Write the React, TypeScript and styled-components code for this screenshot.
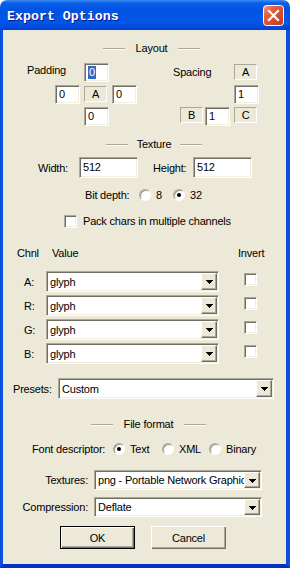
import React from 'react';
import styled, { createGlobalStyle } from 'styled-components';

const GlobalStyle = createGlobalStyle`
    html, body {
        margin: 0;
        padding: 0;
        background: #ffffff;
    }
    body {
        font-family: "Liberation Sans", Arial, sans-serif;
        font-size: 11px;
        letter-spacing: -0.2px;
        color: #000000;
    }
    * {
        box-sizing: border-box;
    }
`;

const Window = styled.div`
    width: 290px;
    height: 568px;
    display: flex;
    flex-direction: column;
    border-radius: 7px 7px 0 0;
    overflow: hidden;
`;

const TitleBar = styled.div`
    flex: none;
    height: 30px;
    display: flex;
    align-items: center;
    justify-content: space-between;
    padding: 0 6px 0 7px;
    background: linear-gradient(
        #3c8ef3 0px,
        #0a5fe6 3px,
        #0054e3 10px,
        #0157e8 22px,
        #0348d8 28px,
        #0240cf 30px
    );
`;

const Title = styled.span`
    font-family: "Liberation Mono", "DejaVu Sans Mono", monospace;
    font-weight: bold;
    font-size: 13.3px;
    letter-spacing: 0;
    color: #ffffff;
    padding-top: 3px;
    text-shadow: 1px 1px 0 #0a1883;
`;

const CloseButton = styled.div`
    width: 21px;
    height: 21px;
    display: flex;
`;

const Client = styled.div`
    flex: 1;
    display: flex;
    flex-direction: column;
    background: #ece9d8;
    border-left: 3px solid #0b52e0;
    border-right: 4px solid #0b4fdc;
    border-bottom: 4px solid #0331c8;
    padding-top: 11px;
`;

const Header = styled.div<{ $top: number; $indent: number; $mid: number }>`
    display: grid;
    grid-template-columns: 22px ${(p) => p.$mid}px 22px;
    align-items: center;
    height: 14px;
    line-height: 14px;
    margin-top: ${(p) => p.$top}px;
    padding-left: ${(p) => p.$indent}px;
`;

const Etch = styled.span`
    height: 2px;
    margin-top: 2px;
    border-top: 1px solid #aca899;
    border-bottom: 1px solid #ffffff;
`;

const HeaderText = styled.span`
    text-align: center;
    white-space: nowrap;
`;

const Row = styled.div<{ $top: number; $left?: number; $h?: number; $gap?: number }>`
    display: flex;
    align-items: center;
    margin-top: ${(p) => p.$top}px;
    padding-left: ${(p) => p.$left ?? 0}px;
    height: ${(p) => p.$h ?? 14}px;
    gap: ${(p) => p.$gap ?? 0}px;
`;

const Label = styled.span<{ $w?: number; $right?: boolean; $pad?: number; $mr?: number }>`
    flex: none;
    width: ${(p) => (p.$w ? `${p.$w}px` : 'auto')};
    text-align: ${(p) => (p.$right ? 'right' : 'left')};
    padding-left: ${(p) => p.$pad ?? 0}px;
    margin-right: ${(p) => p.$mr ?? 0}px;
    line-height: 14px;
    white-space: nowrap;
`;

const TextBox = styled.div<{ $w: number; $h?: number }>`
    flex: none;
    width: ${(p) => p.$w}px;
    height: ${(p) => p.$h ?? 19}px;
    display: flex;
    align-items: center;
    padding-left: 3px;
    background: #ffffff;
    border: 1px solid;
    border-color: #aca899 #ffffff #ffffff #aca899;
    box-shadow: inset 1px 1px 0 #716f64, inset -1px -1px 0 #f1efe2;
    line-height: 13px;
    white-space: nowrap;
`;

const Selected = styled.span`
    background: #316ac5;
    color: #ffffff;
    padding: 0 1px;
`;

const StaticBox = styled.div`
    width: 23px;
    height: 16px;
    display: flex;
    align-items: center;
    justify-content: center;
    border: 1px solid;
    border-color: #aca899 #ffffff #ffffff #aca899;
    line-height: 13px;
`;

const LayoutArea = styled.div`
    display: flex;
    margin-top: 8px;
    padding-left: 24px;
`;

const Cluster = styled.div<{ $cols: string; $ml?: number }>`
    display: grid;
    grid-template-columns: ${(p) => p.$cols};
    grid-template-rows: 20px 20px 20px;
    row-gap: 2px;
    margin-left: ${(p) => p.$ml ?? 0}px;
`;

const Slot = styled.div<{ $c: string; $r: number; $jus?: string; $mt?: number; $mr?: number }>`
    grid-column: ${(p) => p.$c};
    grid-row: ${(p) => p.$r};
    justify-self: ${(p) => p.$jus ?? 'start'};
    align-self: start;
    margin-top: ${(p) => p.$mt ?? 0}px;
    margin-right: ${(p) => p.$mr ?? 0}px;
    line-height: 14px;
    white-space: nowrap;
`;

const RadioOption = styled.span<{ $w?: number }>`
    flex: none;
    display: flex;
    align-items: center;
    gap: 5px;
    width: ${(p) => (p.$w ? `${p.$w}px` : 'auto')};
    line-height: 14px;
`;

const RadioDot = styled.span<{ $on?: boolean }>`
    flex: none;
    width: 12px;
    height: 12px;
    border-radius: 50%;
    display: flex;
    align-items: center;
    justify-content: center;
    background: #ffffff;
    border: 1px solid;
    border-color: #aca899 #ffffff #ffffff #aca899;
    box-shadow: inset 1px 1px 0 #9d9a8c;
    &::after {
        content: '';
        width: 4px;
        height: 4px;
        border-radius: 50%;
        background: ${(p) => (p.$on ? '#000000' : 'transparent')};
    }
`;

const Check = styled.span<{ $mt?: number; $ml?: number }>`
    flex: none;
    width: 13px;
    height: 13px;
    align-self: ${(p) => (p.$mt !== undefined ? 'flex-start' : 'center')};
    margin-top: ${(p) => p.$mt ?? 0}px;
    margin-left: ${(p) => p.$ml ?? 0}px;
    background: #ffffff;
    border: 1px solid;
    border-color: #aca899 #ffffff #ffffff #aca899;
    box-shadow: inset 1px 1px 0 #716f64, inset -1px -1px 0 #f1efe2;
`;

const ChannelList = styled.div`
    display: flex;
    flex-direction: column;
    gap: 3px;
    margin-top: 11px;
    padding-left: 21px;
`;

const ChannelRow = styled.div`
    display: flex;
    align-items: center;
    height: 21px;
`;

const Combo = styled.div<{ $w: number; $h?: number }>`
    flex: none;
    width: ${(p) => p.$w}px;
    height: ${(p) => p.$h ?? 21}px;
    display: flex;
    padding: 1px;
    background: #ffffff;
    border: 1px solid;
    border-color: #aca899 #ffffff #ffffff #aca899;
    box-shadow: inset 1px 1px 0 #716f64, inset -1px -1px 0 #f1efe2;
`;

const ComboText = styled.span`
    flex: 1;
    min-width: 0;
    overflow: hidden;
    white-space: nowrap;
    padding-left: 2px;
    display: flex;
    align-items: center;
    line-height: 14px;
`;

const DropButton = styled.span`
    flex: none;
    width: 16px;
    display: flex;
    align-items: center;
    justify-content: center;
    padding-top: 1px;
    background: #ece9d8;
    border: 1px solid;
    border-color: #ffffff #716f64 #716f64 #ffffff;
    box-shadow: inset -1px -1px 0 #aca899;
`;

const ButtonRow = styled.div`
    display: flex;
    gap: 16px;
    margin-top: 9px;
    padding-left: 57px;
`;

const DlgButton = styled.button<{ $default?: boolean }>`
    width: 75px;
    height: 23px;
    padding: 0;
    font: inherit;
    letter-spacing: inherit;
    color: #000000;
    background: #ece9d8;
    border: ${(p) => (p.$default ? '1px solid #000000' : 'none')};
    box-shadow: inset 1px 1px 0 #ffffff, inset -1px -1px 0 #716f64,
        inset -2px -2px 0 #aca899;
`;

const Arrow = () => (
    <svg width="7" height="4" viewBox="0 0 7 4" shapeRendering="crispEdges">
        <polygon points="0,0 7,0 3.5,4" fill="#000000" />
    </svg>
);

const Dropdown = ({ w, h, value }: { w: number; h?: number; value: string }) => (
    <Combo $w={w} $h={h}>
        <ComboText>{value}</ComboText>
        <DropButton>
            <Arrow />
        </DropButton>
    </Combo>
);

const CloseIcon = () => (
    <svg width="21" height="21" viewBox="0 0 21 21">
        <defs>
            <linearGradient id="closeFill" x1="0" y1="0" x2="1" y2="1">
                <stop offset="0" stopColor="#f3a38c" />
                <stop offset="0.3" stopColor="#e2623f" />
                <stop offset="1" stopColor="#c2361a" />
            </linearGradient>
        </defs>
        <rect x="0.5" y="0.5" width="20" height="20" rx="3" fill="url(#closeFill)" stroke="#ffffff" />
        <path d="M6 6 L15 15 M15 6 L6 15" stroke="#ffffff" strokeWidth="2.2" strokeLinecap="square" />
    </svg>
);

const channels = ['A:', 'R:', 'G:', 'B:'];

const App = () => (
    <>
        <GlobalStyle />
        <Window>
            <TitleBar>
                <Title>Export Options</Title>
                <CloseButton>
                    <CloseIcon />
                </CloseButton>
            </TitleBar>
            <Client>
                <Header $top={0} $indent={100} $mid={53}>
                    <Etch />
                    <HeaderText>Layout</HeaderText>
                    <Etch />
                </Header>
                <LayoutArea>
                    <Cluster $cols="28px 29px 28px 25px">
                        <Slot $c="1 / span 2" $r={1}>
                            Padding
                        </Slot>
                        <Slot $c="3" $r={1}>
                            <TextBox $w={25}>
                                <Selected>0</Selected>
                            </TextBox>
                        </Slot>
                        <Slot $c="2" $r={2}>
                            <TextBox $w={25}>0</TextBox>
                        </Slot>
                        <Slot $c="3" $r={2} $mt={1}>
                            <StaticBox>A</StaticBox>
                        </Slot>
                        <Slot $c="4" $r={2}>
                            <TextBox $w={25}>0</TextBox>
                        </Slot>
                        <Slot $c="3" $r={3}>
                            <TextBox $w={25}>0</TextBox>
                        </Slot>
                    </Cluster>
                    <Cluster $cols="32px 29px 25px" $ml={36}>
                        <Slot $c="1 / span 2" $r={1} $mt={2}>
                            Spacing
                        </Slot>
                        <Slot $c="3" $r={1} $mt={1}>
                            <StaticBox>A</StaticBox>
                        </Slot>
                        <Slot $c="3" $r={2}>
                            <TextBox $w={25}>1</TextBox>
                        </Slot>
                        <Slot $c="1" $r={3} $jus="end" $mr={2}>
                            <StaticBox>B</StaticBox>
                        </Slot>
                        <Slot $c="2" $r={3}>
                            <TextBox $w={25}>1</TextBox>
                        </Slot>
                        <Slot $c="3" $r={3}>
                            <StaticBox>C</StaticBox>
                        </Slot>
                    </Cluster>
                </LayoutArea>
                <Header $top={10} $indent={103} $mid={52}>
                    <Etch />
                    <HeaderText>Texture</HeaderText>
                    <Etch />
                </Header>
                <Row $top={6} $left={35} $h={21}>
                    <Label $w={41}>Width:</Label>
                    <TextBox $w={59} $h={21}>512</TextBox>
                    <Label $w={55} $pad={15}>Height:</Label>
                    <TextBox $w={59} $h={21}>512</TextBox>
                </Row>
                <Row $top={10} $left={82}>
                    <Label $w={54}>Bit depth:</Label>
                    <RadioOption $w={34}>
                        <RadioDot />8
                    </RadioOption>
                    <RadioOption>
                        <RadioDot $on />
                        32
                    </RadioOption>
                </Row>
                <Row $top={12} $left={61} $gap={6}>
                    <Check />
                    <Label>Pack chars in multiple channels</Label>
                </Row>
                <Row $top={18} $left={14}>
                    <Label $w={35}>Chnl</Label>
                    <Label $w={186}>Value</Label>
                    <Label>Invert</Label>
                </Row>
                <ChannelList>
                    {channels.map((c) => (
                        <ChannelRow key={c}>
                            <Label $w={22}>{c}</Label>
                            <Dropdown w={173} value="glyph" />
                            <Check $mt={2} $ml={25} />
                        </ChannelRow>
                    ))}
                </ChannelList>
                <Row $top={14} $left={10} $h={21}>
                    <Label $w={45}>Presets:</Label>
                    <Dropdown w={216} value="Custom" />
                </Row>
                <Header $top={18} $indent={88} $mid={71}>
                    <Etch />
                    <HeaderText>File format</HeaderText>
                    <Etch />
                </Header>
                <Row $top={11} $left={29}>
                    <Label $w={81}>Font descriptor:</Label>
                    <RadioOption $w={49}>
                        <RadioDot $on />
                        Text
                    </RadioOption>
                    <RadioOption $w={47}>
                        <RadioDot />
                        XML
                    </RadioOption>
                    <RadioOption>
                        <RadioDot />
                        Binary
                    </RadioOption>
                </Row>
                <Row $top={14} $h={20}>
                    <Label $w={85} $right $mr={6}>
                        Textures:
                    </Label>
                    <Dropdown w={168} h={20} value="png - Portable Network Graphics" />
                </Row>
                <Row $top={7} $h={20}>
                    <Label $w={85} $right $mr={6}>
                        Compression:
                    </Label>
                    <Dropdown w={168} h={20} value="Deflate" />
                </Row>
                <ButtonRow>
                    <DlgButton $default>OK</DlgButton>
                    <DlgButton>Cancel</DlgButton>
                </ButtonRow>
            </Client>
        </Window>
    </>
);

export default App;
